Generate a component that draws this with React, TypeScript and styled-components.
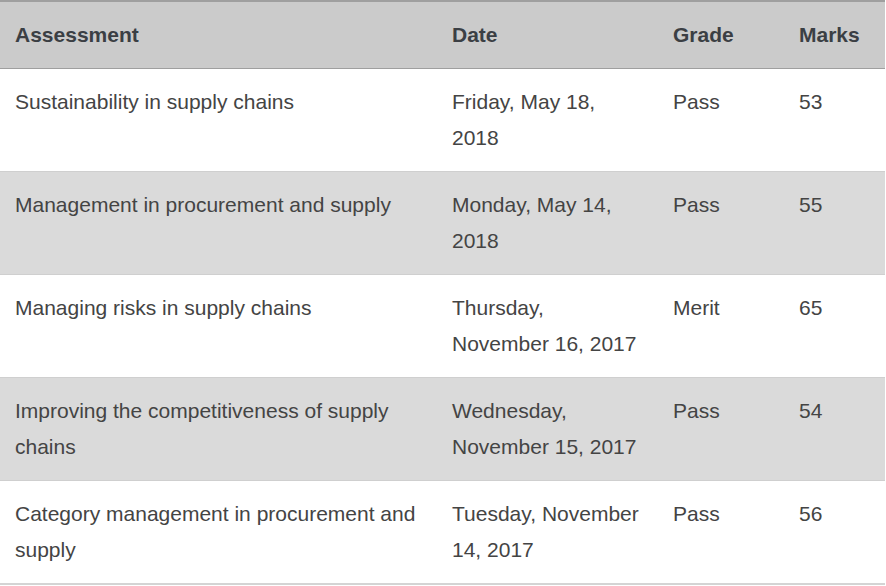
import React from "react";
import styled, { createGlobalStyle } from "styled-components";

const Global = createGlobalStyle`
  html, body { margin: 0; padding: 0; background: #ffffff; }
  body { font-family: "Liberation Sans", Arial, sans-serif; }
`;

const Table = styled.table`
  width: 885px;
  border-collapse: collapse;
  table-layout: fixed;
  font-family: "Liberation Sans", Arial, sans-serif;
  font-size: 21px;
  line-height: 36px;
  color: #444444;
  border-bottom: 2px solid #d4d4d4;
`;

const HeadRow = styled.tr`
  background: #cbcbcb;
  border-top: 2px solid #9f9f9f;
  border-bottom: 1px solid #9f9f9f;
`;

const Th = styled.th<{ $w: number }>`
  text-align: left;
  font-weight: bold;
  color: #3b3f44;
  padding: 15px;
  vertical-align: top;
  width: ${(p) => p.$w - 30}px;
`;

const Row = styled.tr<{ $alt: boolean }>`
  background: ${(p) => (p.$alt ? "#dadada" : "#ffffff")};
  border-top: 1px solid #cfcfcf;
`;

const Td = styled.td`
  padding: 15px;
  vertical-align: top;
  text-align: left;
`;

const rows = [
  ["Sustainability in supply chains", "Friday, May 18, 2018", "Pass", "53"],
  ["Management in procurement and supply", "Monday, May 14, 2018", "Pass", "55"],
  ["Managing risks in supply chains", "Thursday, November 16, 2017", "Merit", "65"],
  ["Improving the competitiveness of supply chains", "Wednesday, November 15, 2017", "Pass", "54"],
  ["Category management in procurement and supply", "Tuesday, November 14, 2017", "Pass", "56"],
];

export default function App() {
  return (
    <>
      <Global />
      <Table>
        <thead>
          <HeadRow>
            <Th $w={437}>Assessment</Th>
            <Th $w={221}>Date</Th>
            <Th $w={126}>Grade</Th>
            <Th $w={101}>Marks</Th>
          </HeadRow>
        </thead>
        <tbody>
          {rows.map((r, i) => (
            <Row key={i} $alt={i % 2 === 1}>
              {r.map((c, j) => (
                <Td key={j}>{c}</Td>
              ))}
            </Row>
          ))}
        </tbody>
      </Table>
    </>
  );
}
